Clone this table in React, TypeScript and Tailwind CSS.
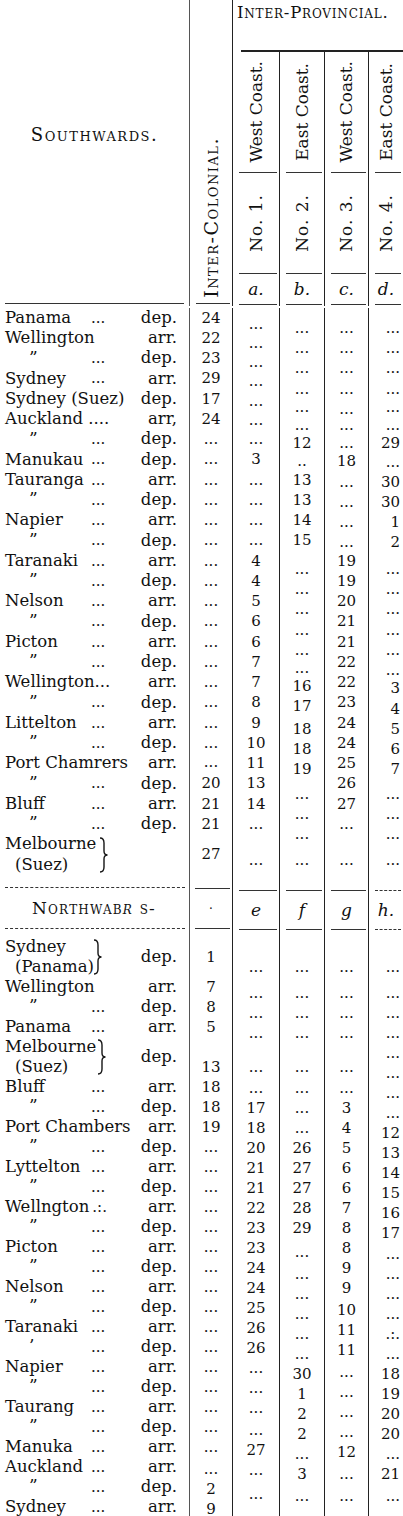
import React from 'react';

type Cell = [number, string];
type Label = {
  n?: string;
  d?: string;
  r?: string;
  ditto?: boolean;
  brace?: [string, string];
  bw?: string;
};
type Sizes = { px: number; row: string; pair: string };

const SOUTH: Sizes = { px: 20.25, row: 'h-[20.25px]', pair: 'h-[40.5px]' };
const NORTH: Sizes = { px: 20, row: 'h-[20px]', pair: 'h-[40px]' };

const run = (start: number, count: number, text = '...'): Cell[] =>
  Array.from({ length: count }, (_, i) => [start + i, text] as Cell);

const D: Label = { n: '”', d: '...', r: 'dep.', ditto: true };

const southLabels: Label[] = [
  { n: 'Panama', d: '...', r: 'dep.' },
  { n: 'Wellington', r: 'arr.' },
  D,
  { n: 'Sydney', d: '...', r: 'arr.' },
  { n: 'Sydney (Suez)', r: 'dep.' },
  { n: 'Auckland ....', r: 'arr,' },
  D,
  { n: 'Manukau', d: '...', r: 'dep.' },
  { n: 'Tauranga', d: '...', r: 'arr.' },
  D,
  { n: 'Napier', d: '...', r: 'arr.' },
  D,
  { n: 'Taranaki', d: '...', r: 'arr.' },
  D,
  { n: 'Nelson', d: '...', r: 'arr.' },
  D,
  { n: 'Picton', d: '...', r: 'arr.' },
  D,
  { n: 'Wellington...', r: 'arr.' },
  D,
  { n: 'Littelton', d: '...', r: 'arr.' },
  D,
  { n: 'Port Chamrers', r: 'arr.' },
  D,
  { n: 'Bluff', d: '...', r: 'arr.' },
  D,
  { brace: ['Melbourne', '(Suez)'], bw: 'w-[98px]' },
];

const northLabels: Label[] = [
  { brace: ['Sydney', '(Panama)'], r: 'dep.', bw: 'w-[92px]' },
  { n: 'Wellington', r: 'arr.' },
  D,
  { n: 'Panama', d: '...', r: 'arr.' },
  { brace: ['Melbourne', '(Suez)'], r: 'dep.', bw: 'w-[96px]' },
  { n: 'Bluff', d: '...', r: 'arr.' },
  D,
  { n: 'Port Chambers', r: 'arr.' },
  D,
  { n: 'Lyttelton', d: '...', r: 'arr.' },
  D,
  { n: 'Wellngton', d: '.:.', r: 'arr.' },
  D,
  { n: 'Picton', d: '...', r: 'arr.' },
  D,
  { n: 'Nelson', d: '...', r: 'arr.' },
  D,
  { n: 'Taranaki', d: '...', r: 'arr.' },
  { n: '’', d: '...', r: 'dep.', ditto: true },
  { n: 'Napier', d: '...', r: 'arr.' },
  D,
  { n: 'Taurang', d: '...', r: 'arr.' },
  D,
  { n: 'Manuka', d: '...', r: 'arr.' },
  { n: 'Auckland', d: '...', r: 'arr.' },
  D,
  { n: 'Sydney', d: '...', r: 'arr.' },
];

const southIC: Cell[] = [
  [0, '24'], [1, '22'], [2, '23'], [3, '29'], [4, '17'], [5, '24'],
  ...run(6, 16), [21.95, '...'],
  [23, '20'], [24, '21'], [25, '21'], [26.5, '27'],
];
const southA: Cell[] = [
  [0.3, '...'], [1.25, '...'], [2.2, '...'], [3.15, '...'], [4.1, '...'], [5.05, '...'], [6, '...'],
  [7, '3'], ...run(8, 4),
  [12, '4'], [13, '4'], [14, '5'], [15, '6'], [16, '6'], [17, '7'], [18, '7'],
  [19, '8'], [20, '9'], [21, '10'], [22, '11'], [23, '13'], [24, '14'],
  [25, '...'], [26.8, '...'],
];
const southB: Cell[] = [
  ...run(0.5, 4), [4.4, '...'], [5.3, '...'], [6.2, '12'], [7.1, '..'],
  [8, '13'], [9, '13'], [10, '14'], [11, '15'],
  ...run(12.4, 5), [17.3, '...'],
  [18.2, '16'], [19.2, '17'], [20.3, '18'], [21.3, '18'], [22.3, '19'],
  ...run(23.5, 3), [26.8, '...'],
];
const southC: Cell[] = [
  ...run(0.5, 5), [5.3, '...'], [6.2, '...'], [7.1, '18'], ...run(8.1, 3), [11.1, '...'],
  [12, '19'], [13, '19'], [14, '20'], [15, '21'], [16, '21'], [17, '22'],
  [18, '22'], [19, '23'], [20, '24'], [21, '24'], [22, '25'], [23, '26'],
  [24, '27'], [25, '...'], [26.8, '...'],
];
const southD: Cell[] = [
  ...run(0.5, 4), [4.4, '...'], [5.3, '...'], [6.2, '29'], [7.15, '...'],
  [8.1, '30'], [9.1, '30'], [10.1, '1'], [11.1, '2'],
  ...run(12.4, 5), [17.4, '...'],
  [18.3, '3'], [19.3, '4'], [20.3, '5'], [21.3, '6'], [22.3, '7'],
  [23.5, '...'], ...run(24.5, 2), [26.8, '...'],
];

const northIC: Cell[] = [
  [0.5, '1'], [2, '7'], [3, '8'], [4, '5'], [6, '13'], [7, '18'], [8, '18'],
  [9, '19'], ...run(10, 16), [26.1, '...'], [27.1, '2'], [28.1, '9'],
];
const northE: Cell[] = [
  [1, '...'], ...run(2.3, 3), [6, '...'], [7.1, '...'], [8.1, '17'], [9.1, '18'],
  [10.1, '20'], [11.1, '21'], [12.1, '21'], [13.1, '22'], [14.1, '23'], [15.1, '23'],
  [16.1, '24'], [17.1, '24'], [18.1, '25'], [19.1, '26'], [20.1, '26'],
  ...run(21.1, 3), [24.2, '...'], [25.2, '27'], [26.2, '...'], [27.4, '...'],
];
const northF: Cell[] = [
  [1, '...'], ...run(2.3, 3), [6, '...'], [7.1, '...'], [8.1, '...'], [9.1, '...'],
  [10.1, '26'], [11.1, '27'], [12.1, '27'], [13.1, '28'], [14.1, '29'],
  [15.3, '...'], [16.4, '...'], [17.4, '...'], [18.4, '...'], [19.4, '...'], [20.4, '...'],
  [21.4, '30'], [22.4, '1'], [23.4, '2'], [24.4, '2'], [25.4, '...'], [26.4, '3'], [27.5, '...'],
];
const northG: Cell[] = [
  [1, '...'], ...run(2.3, 3), [6, '...'], [7.1, '...'],
  [8.1, '3'], [9.1, '4'], [10.1, '5'], [11.1, '6'], [12.1, '6'], [13.1, '7'], [14.1, '8'],
  [15.1, '8'], [16.1, '9'], [17.1, '9'], [18.2, '10'], [19.2, '11'], [20.2, '11'],
  ...run(21.3, 3), [24.3, '...'], [25.3, '12'], [26.4, '...'], [27.5, '...'],
];
const northH: Cell[] = [
  [1, '...'], ...run(2.3, 6), [8.3, '...'],
  [9.3, '12'], [10.3, '13'], [11.3, '14'], [12.3, '15'], [13.3, '16'], [14.3, '17'],
  ...run(15.4, 4), [19.4, '.:.'], [20.4, '...'],
  [21.4, '18'], [22.4, '19'], [23.4, '20'], [24.4, '20'], [25.4, '...'], [26.4, '21'], [27.5, '...'],
];

const heads = [
  { t: 'West Coast.', n: 'No. 1.', l: 'a.', w: 'w-[46px]' },
  { t: 'East Coast.', n: 'No. 2.', l: 'b.', w: 'w-[45px] border-l border-[#222]' },
  { t: 'West Coast.', n: 'No. 3.', l: 'c.', w: 'w-[44px] border-l border-[#222]' },
  { t: 'East Coast.', n: 'No. 4.', l: 'd.', w: 'w-[35px] border-l border-[#222]' },
];

const northHeads = [
  { l: 'e', w: 'w-[47px]', line: 'border-solid' },
  { l: 'f', w: 'w-[45px]', line: 'border-solid' },
  { l: 'g', w: 'w-[44px]', line: 'border-solid' },
  { l: 'h.', w: 'w-[35px]', line: 'border-dashed' },
];

function Brace() {
  return (
    <svg width="11" height="38" viewBox="0 0 11 38" className="shrink-0">
      <path
        d="M2 2 Q6 2 6 7 L6 15 Q6 19 9.5 19 Q6 19 6 23 L6 31 Q6 36 2 36"
        fill="none"
        stroke="#151515"
        strokeWidth="1.4"
      />
    </svg>
  );
}

function LabelRow({ l, s }: { l: Label; s: Sizes }) {
  if (l.brace) {
    return (
      <div className={`flex items-center ${s.pair}`}>
        <div className={`flex shrink-0 flex-col pl-[5px] ${l.bw}`}>
          <span className={`flex items-center whitespace-nowrap ${s.row}`}>{l.brace[0]}</span>
          <span className={`flex items-center whitespace-nowrap pl-[10px] ${s.row}`}>{l.brace[1]}</span>
        </div>
        <Brace />
        <span className="ml-auto pr-[12px]">{l.r}</span>
      </div>
    );
  }
  return (
    <div className={`flex items-center ${s.row}`}>
      {l.ditto ? (
        <span className="min-w-[88px] shrink-0 self-start pl-[29px] pt-[1px] text-[17px] leading-[14px]">{l.n}</span>
      ) : (
        <span className="min-w-[88px] shrink-0 whitespace-nowrap pl-[5px]">{l.n}</span>
      )}
      {l.d && <span className="pl-[3px] text-[15px]">{l.d}</span>}
      <span className="ml-auto pr-[12px]">{l.r}</span>
    </div>
  );
}

function DataCol({ items, s, className, align }: { items: Cell[]; s: Sizes; className: string; align: string }) {
  let end = 0;
  return (
    <div className={`flex flex-col text-[15px] ${className}`}>
      {items.map(([pos, text], i) => {
        const mt = (pos - end) * s.px;
        end = pos + 1;
        return (
          <div key={i} style={{ marginTop: mt }} className={`flex shrink-0 items-center ${s.row} ${align}`}>
            {text}
          </div>
        );
      })}
    </div>
  );
}

function Body({ labels, cols, s }: { labels: Label[]; cols: Cell[][]; s: Sizes }) {
  return (
    <div className="flex">
      <div className="w-[189px] shrink-0 text-[16.5px]">
        {labels.map((l, i) => (
          <LabelRow key={i} l={l} s={s} />
        ))}
      </div>
      <DataCol items={cols[0]} s={s} className="w-[43px] border-l border-[#555]" align="justify-center" />
      <DataCol items={cols[1]} s={s} className="w-[47px] border-l border-[#222]" align="justify-center" />
      <DataCol items={cols[2]} s={s} className="w-[45px] border-l border-[#222]" align="justify-center" />
      <DataCol items={cols[3]} s={s} className="w-[44px] border-l border-[#222]" align="justify-center" />
      <DataCol items={cols[4]} s={s} className="w-[35px] border-l border-[#222]" align="justify-end pr-[3px]" />
    </div>
  );
}

export default function App() {
  return (
    <div className="h-[1516px] w-[403px] overflow-hidden bg-white font-['DejaVu_Serif',serif] leading-none text-[#111]">
      {/* heading */}
      <div className="flex h-[306px]">
        <div className="flex w-[189px] shrink-0 flex-col">
          <div className="flex flex-1 items-center justify-center pb-[34px] text-[18px] tracking-[1.5px] [font-variant:small-caps]">
            Southwards.
          </div>
          <div className="mx-[5px] mb-[2px] border-t border-[#333]" />
        </div>
        <div className="flex w-[43px] shrink-0 flex-col border-l border-[#555]">
          <div className="flex flex-1 items-end justify-center pb-[5px]">
            <span className="rotate-180 whitespace-nowrap text-[19px] tracking-[1.5px] [font-variant:small-caps] [writing-mode:vertical-rl]">
              Inter-Colonial.
            </span>
          </div>
          <div className="mb-[2px] ml-[6px] mr-[2px] border-t border-[#333]" />
        </div>
        <div className="flex w-[171px] shrink-0 flex-col border-l border-[#222]">
          <div className="h-[50px] whitespace-nowrap pl-[4px] pt-[5px] text-[16.5px] tracking-[0.8px] [font-variant:small-caps]">
            Inter-Provincial.
          </div>
          <div className="ml-[8px] border-t-2 border-[#222]" />
          <div className="flex flex-1">
            {heads.map((h) => (
              <div key={h.n} className={`flex shrink-0 flex-col ${h.w}`}>
                <div className="flex h-[120px] items-center justify-center">
                  <span className="rotate-180 whitespace-nowrap text-[17px] [writing-mode:vertical-rl]">{h.t}</span>
                </div>
                <div className="ml-[6px] mr-[2px] border-t border-[#333]" />
                <div className="flex h-[100px] items-center justify-center">
                  <span className="rotate-180 whitespace-nowrap text-[17px] tracking-[1px] [writing-mode:vertical-rl]">{h.n}</span>
                </div>
                <div className="ml-[6px] mr-[2px] border-t border-[#333]" />
                <div className="flex h-[30px] items-center justify-center text-[17px] italic">{h.l}</div>
                <div className="ml-[6px] mr-[2px] border-t border-[#333]" />
              </div>
            ))}
          </div>
        </div>
      </div>

      <div className="pt-[2px]">
        <Body labels={southLabels} cols={[southIC, southA, southB, southC, southD]} s={SOUTH} />
      </div>

      {/* northwards heading */}
      <div className="flex h-[62px]">
        <div className="flex w-[189px] shrink-0 flex-col justify-between pb-[8px] pt-[12px]">
          <div className="ml-[5px] mr-[4px] border-t border-dashed border-[#333]" />
          <div className="pl-[32px] text-[17px] tracking-[1.2px] [font-variant:small-caps]">
            Northwab<span className="italic">r</span> s-
          </div>
          <div className="ml-[5px] mr-[4px] border-t border-dashed border-[#333]" />
        </div>
        <div className="flex w-[43px] shrink-0 flex-col justify-between border-l border-[#555] pb-[8px] pt-[13px]">
          <div className="ml-[5px] mr-[2px] border-t border-[#333]" />
          <div className="text-center text-[12px]">·</div>
          <div className="ml-[5px] mr-[2px] border-t border-[#333]" />
        </div>
        {northHeads.map((h) => (
          <div key={h.l} className={`flex shrink-0 flex-col justify-between border-l border-[#222] pb-[7px] pt-[15px] ${h.w}`}>
            <div className={`ml-[6px] mr-[2px] border-t border-[#333] ${h.line}`} />
            <div className="text-center text-[17px] italic">{h.l}</div>
            <div className={`ml-[6px] mr-[2px] border-t border-[#333] ${h.line}`} />
          </div>
        ))}
      </div>

      <Body labels={northLabels} cols={[northIC, northE, northF, northG, northH]} s={NORTH} />
    </div>
  );
}
